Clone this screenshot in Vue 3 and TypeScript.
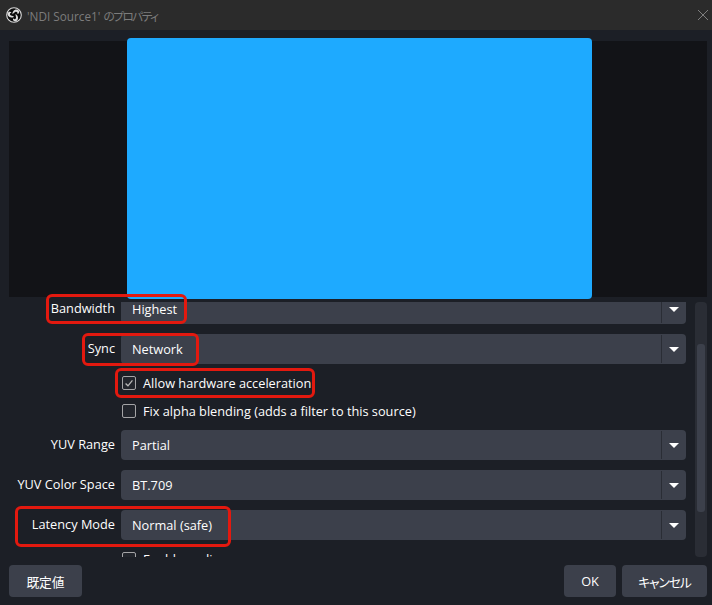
<script setup lang="ts">
interface Row {
  kind: 'combo' | 'check'
  label: string
  checked?: boolean
}

const rows: Row[] = [
  { kind: 'combo', label: 'Bandwidth|Highest' },
  { kind: 'combo', label: 'Sync|Network' },
  { kind: 'check', label: 'Allow hardware acceleration', checked: true },
  { kind: 'check', label: 'Fix alpha blending (adds a filter to this source)' },
  { kind: 'combo', label: 'YUV Range|Partial' },
  { kind: 'combo', label: 'YUV Color Space|BT.709' },
  { kind: 'combo', label: 'Latency Mode|Normal (safe)' },
  { kind: 'check', label: 'Enable audio' },
]

const callouts = ['bandwidth', 'sync', 'hardware', 'latency']
const bladeAngles = [0, 120, 240]
</script>

<template>
  <div class="dialog">
    <header class="titlebar">
      <svg class="logo" viewBox="0 0 32 32" aria-hidden="true">
        <circle cx="16" cy="16" r="14.6" fill="#0c0c0c" stroke="#dcdcdc" stroke-width="2.2" />
        <path
          v-for="a in bladeAngles"
          :key="a"
          d="M13 14.5C12.5 9.5 16 5 21 5c3 0 5.500 2 5.500 5 0 2.500-2 4-4 4 1.500-2.500-.5-5-3-4.500-2.500.5-3 2.500-6.500 5z"
          fill="#dcdcdc"
          :transform="`rotate(${a} 16 16)`"
        />
      </svg>
      <span class="title">'NDI Source1' <span class="title-ja">のプロパティ</span></span>
      <svg class="close" viewBox="0 0 10 10" aria-hidden="true">
        <path d="M0 0l10 10M10 0L0 10" stroke="#7f7f7f" stroke-width="1" fill="none" />
      </svg>
    </header>

    <main class="content">
      <section class="preview">
        <div class="video"></div>
      </section>

      <section class="props">
        <div class="scroller">
          <div class="form">
            <template v-for="row in rows" :key="row.label">
              <div v-if="row.kind === 'combo'" class="row">
                <span class="label">{{ row.label.split('|')[0] }}</span>
                <div class="combo">
                  <span class="value">{{ row.label.split('|')[1] }}</span>
                  <span class="arrow"><i></i></span>
                </div>
              </div>
              <div v-else class="row check-row">
                <span></span>
                <label class="check">
                  <span class="box">
                    <svg v-if="row.checked" viewBox="0 0 14 14" aria-hidden="true">
                      <path d="M3 7.500l2.800 2.800L11 4" stroke="#b8b8b8" stroke-width="1.500" fill="none" />
                    </svg>
                  </span>
                  {{ row.label }}
                </label>
              </div>
            </template>
          </div>
        </div>
        <div class="scrollbar"><div class="handle"></div></div>
      </section>

      <footer class="buttons">
        <button class="btn default">既定値</button>
        <div class="spacer"></div>
        <button class="btn ok">OK</button>
        <button class="btn cancel">キャンセル</button>
      </footer>
    </main>

    <div v-for="c in callouts" :key="c" class="callout" :class="c"></div>
  </div>
</template>

<style scoped>
.dialog {
  position: relative;
  width: 712px;
  height: 605px;
  overflow: hidden;
  background: #1c1f26;
  color: #fefefe;
  font-family: "Open Sans", "Noto Sans CJK JP", sans-serif;
  font-size: 12.75px;
  display: flex;
  flex-direction: column;
}
.titlebar {
  height: 30px;
  flex: none;
  background: #2b2b2b;
  display: flex;
  align-items: center;
  padding: 0 4px 0 6px;
}
.logo { width: 16px; height: 16px; flex: none; }
.title {
  margin-left: 5px;
  font-size: 11.75px;
  color: #7c7c7c;
  flex: 1;
}
.title-ja {
  font-feature-settings: "palt";
  letter-spacing: -1.6px;
}
.close { width: 10px; height: 10px; flex: none; }
.content {
  flex: 1;
  display: flex;
  flex-direction: column;
  padding: 11px 5px 8px 9px;
  min-height: 0;
}
.preview {
  height: 256px;
  flex: none;
  background: #121317;
  display: flex;
  justify-content: flex-start;
}
.video {
  width: 465px;
  height: 261px;
  margin: -3px 0 0 118px;
  background: #1eaaff;
  border-radius: 4px;
}
.props {
  flex: none;
  height: 255px;
  margin-top: 5px;
  display: flex;
  gap: 9px;
}
.scroller {
  width: 677px;
  overflow: hidden;
  flex: none;
}
.form {
  margin-top: -8px;
  display: flex;
  flex-direction: column;
  gap: 10px;
}
.row {
  display: grid;
  grid-template-columns: 106px 565px;
  column-gap: 6px;
  align-items: center;
  height: 30px;
}
.check-row { height: 18px; }
.label {
  text-align: right;
  white-space: nowrap;
  justify-self: end;
  margin-bottom: 2px;
}
.combo {
  height: 30px;
  background: #3c404b;
  border-radius: 4px;
  display: flex;
  align-items: center;
  justify-content: space-between;
  padding-left: 11px;
}
.arrow {
  width: 24px;
  height: 28px;
  border-left: 1px solid #2a2d35;
  display: flex;
  align-items: center;
  justify-content: center;
}
.arrow i {
  width: 0;
  height: 0;
  border-left: 5px solid transparent;
  border-right: 5px solid transparent;
  border-top: 5px solid #fff;
}
.check {
  display: flex;
  align-items: center;
  gap: 7px;
  white-space: nowrap;
}
.box {
  width: 14px;
  height: 14px;
  box-sizing: border-box;
  flex: none;
  margin-left: 1px;
  border: 1px solid #a4a4a6;
  border-radius: 2px;
  background: #22252c;
}
.box svg { display: block; width: 12px; height: 12px; }
.scrollbar {
  width: 12px;
  height: 255px;
  flex: none;
  background: #2a2d35;
  border-radius: 4px;
  padding: 42px 2px 0;
  box-sizing: border-box;
}
.handle {
  height: 168px;
  background: #3c404b;
  border-radius: 3px;
}
.buttons {
  margin-top: 8px;
  display: flex;
  height: 32px;
  gap: 6px;
}
.spacer { flex: 1; }
.btn {
  border: 0;
  background: #3c404b;
  color: #fefefe;
  border-radius: 4px;
  font: inherit;
  padding: 0;
}
.default { width: 73px; }
.ok { width: 52px; }
.cancel { width: 85px; font-feature-settings: "palt"; letter-spacing: -1px; }
.callout {
  position: absolute;
  box-sizing: border-box;
  border: 3px solid #e3190f;
  border-radius: 6px;
}
.bandwidth { left: 46px; top: 294px; width: 141px; height: 30px; }
.sync { left: 82px; top: 333px; width: 117px; height: 33px; }
.hardware { left: 115px; top: 368px; width: 200px; height: 30px; }
.latency { left: 15px; top: 506px; width: 216px; height: 41px; }
</style>
